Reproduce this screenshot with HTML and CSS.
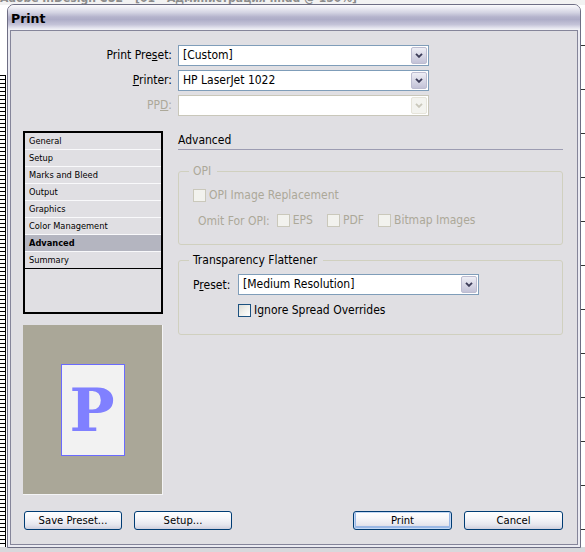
FILE: index.html
```html
<!DOCTYPE html>
<html>
<head>
<meta charset="utf-8">
<link rel="stylesheet" href="styles.css">
</head>
<body>
<div class="app">
  <div class="app-title"><span class="app-title-text">Adobe InDesign CS2 - [01 - Администрация .indd @ 150%]</span></div>
  <div class="app-body">
    <div class="ruler-v"></div>
    <div class="canvas"></div>
    <div class="ruler-r"></div>
  </div>
  <div class="app-status"></div>
</div>

<div class="dialog">
  <div class="titlebar">Print</div>
  <div class="client">
    <div class="top-form">
      <div class="lbl">Print Pre<u>s</u>et:</div>
      <div class="select"><span class="value">[Custom]</span><span class="arrow"><svg width="8" height="5" viewBox="0 0 8 5"><path d="M1 0.8 L4 3.8 L7 0.8" fill="none" stroke="#3c3c58" stroke-width="1.9"/></svg></span></div>
      <div class="lbl"><u>P</u>rinter:</div>
      <div class="select"><span class="value">HP LaserJet 1022</span><span class="arrow"><svg width="8" height="5" viewBox="0 0 8 5"><path d="M1 0.8 L4 3.8 L7 0.8" fill="none" stroke="#3c3c58" stroke-width="1.9"/></svg></span></div>
      <div class="lbl disabled">PP<u>D</u>:</div>
      <div class="select is-disabled"><span class="value"></span><span class="arrow"><svg width="8" height="5" viewBox="0 0 8 5"><path d="M1 0.8 L4 3.8 L7 0.8" fill="none" stroke="#cac8bb" stroke-width="1.9"/></svg></span></div>
    </div>

    <div class="main">
      <div class="left-col">
        <ul class="nav">
          <li>General</li>
          <li>Setup</li>
          <li>Marks and Bleed</li>
          <li>Output</li>
          <li>Graphics</li>
          <li>Color Management</li>
          <li class="active">Advanced</li>
          <li class="last">Summary</li>
        </ul>
        <div class="preview">
          <div class="page"><span class="page-letter">P</span></div>
        </div>
      </div>

      <div class="right-col">
        <div class="section-title">Advanced</div>

        <fieldset class="group group-opi is-disabled">
          <legend>OPI</legend>
          <div class="row row-cb">
            <span class="cb"></span><span class="cb-label">OPI Image Replacement</span>
          </div>
          <div class="row row-omit">
            <span class="omit-label">Omit For OPI:</span>
            <span class="cb"></span><span class="cb-label">EPS</span>
            <span class="cb cb-gap"></span><span class="cb-label">PDF</span>
            <span class="cb cb-gap"></span><span class="cb-label">Bitmap Images</span>
          </div>
        </fieldset>

        <fieldset class="group group-flat">
          <legend>Transparency Flattener</legend>
          <div class="row row-preset">
            <span class="preset-label">P<u>r</u>eset:</span>
            <div class="select select-wide"><span class="value">[Medium Resolution]</span><span class="arrow"><svg width="8" height="5" viewBox="0 0 8 5"><path d="M1 0.8 L4 3.8 L7 0.8" fill="none" stroke="#3c3c58" stroke-width="1.9"/></svg></span></div>
          </div>
          <div class="row row-ignore">
            <span class="cb cb-on"></span><span class="cb-label">Ignore Spread Overrides</span>
          </div>
        </fieldset>
      </div>
    </div>

    <div class="footer">
      <div class="btn-group">
        <div class="xp-btn">Save Preset...</div>
        <div class="xp-btn">Setup...</div>
      </div>
      <div class="btn-group btn-group-right">
        <div class="xp-btn is-default">Print</div>
        <div class="xp-btn">Cancel</div>
      </div>
    </div>
  </div>
</div>
</body>
</html>
```

FILE: styles.css
```css
html, body {
  margin: 0;
  padding: 0;
}
body {
  width: 585px;
  height: 552px;
  overflow: hidden;
  position: relative;
  font-family: "DejaVu Sans Condensed", "DejaVu Sans", sans-serif;
  font-size: 12px;
  color: #000;
  background: #fff;
}

/* ---------- background application ---------- */
.app {
  width: 585px;
  height: 552px;
  display: flex;
  flex-direction: column;
  background: #fff;
}
.app-title {
  height: 5px;
  overflow: hidden;
  background: #f2f2f2;
}
.app-title-text {
  display: block;
  margin-top: -9px;
  line-height: 14px;
  font-size: 12px;
  font-weight: bold;
  color: #8c8c8c;
  white-space: nowrap;
}
.app-body {
  flex: 1;
  display: flex;
}
.ruler-v {
  width: 5px;
  border-right: 1px solid #000;
  background:
    repeating-linear-gradient(to bottom, #000 0 1px, #fff 1px 4px);
  margin-top: 70px;
}
.canvas {
  flex: 1;
  background: #fff;
}
.ruler-r {
  width: 4px;
  background: repeating-linear-gradient(to bottom, #fff 0 40px, #333 40px 41px, #fff 41px 44px);
}
.app-status {
  height: 5px;
  background: #d8d8dc;
}

/* ---------- dialog window ---------- */
.dialog {
  position: absolute;
  left: 7px;
  top: 4px;
  width: 574px;
  height: 544px;
  box-sizing: border-box;
  border: 1px solid #6e6e84;
  border-radius: 7px 7px 0 0;
  background: #ebebf2;
  display: flex;
  flex-direction: column;
}
.titlebar {
  height: 25px;
  box-sizing: border-box;
  flex: none;
  border-radius: 6px 6px 0 0;
  background: linear-gradient(to bottom,
    #fbfbfd 0%, #ececf3 12%, #d4d4e3 30%, #b4b3cc 48%, #aeadc8 58%,
    #c4c3d8 78%, #e4e4ee 92%, #f4f4f8 100%);
  padding-left: 3px;
  padding-top: 2px;
  font-family: "DejaVu Sans", sans-serif;
  font-weight: bold;
  font-size: 12.5px;
  line-height: 23px;
  color: #000;
}
.client {
  flex: 1;
  margin: 0 2px 2px 2px;
  border: 1px solid #85859a;
  background: #e0dfe3;
  display: flex;
  flex-direction: column;
}

/* ---------- top form ---------- */
.top-form {
  margin-top: 14px;
  display: grid;
  grid-template-columns: 161px 251px;
  grid-auto-rows: 21px;
  column-gap: 6px;
  row-gap: 4px;
  align-items: center;
}
.lbl {
  text-align: right;
  line-height: 21px;
}
.lbl.disabled {
  color: #aca899;
}
u {
  text-decoration: underline;
  text-underline-offset: 1px;
}

.select {
  display: flex;
  height: 21px;
  box-sizing: border-box;
  border: 1px solid #7f9db9;
  background: #fff;
}
.select .value {
  flex: 1;
  padding-left: 4px;
  line-height: 19px;
  white-space: nowrap;
}
.select .arrow {
  width: 16px;
  margin: 1px 1px 1px 0;
  box-sizing: border-box;
  border: 1px solid #bcbcd0;
  border-radius: 2px;
  background: linear-gradient(to bottom, #eeeef5 0%, #d8d8e6 50%, #c3c2d7 100%);
  display: flex;
  align-items: center;
  justify-content: center;
}
.select.is-disabled {
  border-color: #c9c7ba;
}
.select.is-disabled .arrow {
  border-color: #e6e4da;
  background: #f3f3ef;
}
.select-wide {
  width: 241px;
}

/* ---------- main ---------- */
.main {
  margin-top: 15px;
  display: flex;
  gap: 15px;
  padding-left: 12px;
}
.left-col {
  width: 140px;
  display: flex;
  flex-direction: column;
  gap: 11px;
}
.nav {
  list-style: none;
  margin: 0;
  padding: 0;
  height: 183px;
  box-sizing: border-box;
  border: 2px solid #000;
  font-size: 9.2px;
}
.nav li {
  height: 16px;
  line-height: 15px;
  padding-left: 4px;
  border-bottom: 1px solid #f9f9fb;
  white-space: nowrap;
}
.nav li.active {
  background: #b4b5c0;
  font-weight: bold;
}
.nav li.last {
  border-bottom: 1px solid #000;
}
.preview {
  height: 170px;
  box-sizing: border-box;
  background: #aaa798;
  border-right: 1px solid #f4f4f6;
  border-bottom: 1px solid #f4f4f6;
  display: flex;
  align-items: center;
  justify-content: center;
}
.page {
  width: 64px;
  height: 92px;
  box-sizing: border-box;
  border: 1px solid #6a6aff;
  background: #f2f2f2;
  display: flex;
  align-items: center;
  justify-content: center;
}
.page-letter {
  font-family: "DejaVu Serif", "Liberation Serif", serif;
  font-weight: bold;
  font-size: 60px;
  line-height: 44px;
  color: #8080ff;
  padding-right: 1px;
}

.right-col {
  width: 385px;
  display: flex;
  flex-direction: column;
}
.section-title {
  line-height: 14px;
  padding-top: 2px;
  box-sizing: border-box;
  height: 19px;
  border-bottom: 1px solid #9c9cb2;
}

.group {
  margin: 0;
  padding: 0 10px;
  border: 1px solid #d0d0bf;
  border-radius: 3px;
  min-width: 0;
}
.group legend {
  padding: 0 6px 0 4px;
  line-height: 12px;
}
.group-opi {
  margin-top: 15px;
  padding-top: 12px;
  padding-bottom: 17px;
}
.group-flat {
  margin-top: 9px;
  padding-top: 8px;
  padding-bottom: 17px;
}
.group.is-disabled {
  color: #aca899;
}
.row {
  display: flex;
  align-items: center;
  padding-left: 4px;
  white-space: nowrap;
}
.row-cb {
  height: 13px;
}
.row-omit {
  height: 13px;
  margin-top: 12px;
  padding-left: 9px;
}
.omit-label {
  margin-right: 7px;
}
.cb {
  width: 13px;
  height: 13px;
  box-sizing: border-box;
  flex: none;
  border: 1px solid #cac8bb;
  background: #f2f2ee;
}
.cb-on {
  border-color: #1c5180;
  background: linear-gradient(135deg, #dcdcd6 0%, #f0f0ec 50%, #ffffff 100%);
}
.cb-label {
  margin-left: 3px;
  line-height: 13px;
}
.cb-gap {
  margin-left: 14px;
}
.row-preset {
  height: 21px;
}
.preset-label {
  width: 45px;
}
.row-ignore {
  height: 13px;
  margin-top: 9px;
  padding-left: 49px;
}

/* ---------- footer ---------- */
.footer {
  margin-top: auto;
  display: flex;
  justify-content: space-between;
  padding: 0 14px 14px 13px;
}
.btn-group {
  display: flex;
  gap: 12px;
}
.btn-group-right .xp-btn {
  width: 99px;
}
.xp-btn {
  width: 98px;
  height: 19px;
  box-sizing: border-box;
  border: 1px solid #003c74;
  border-radius: 3px;
  background: linear-gradient(to bottom, #ffffff 0%, #f7f7fa 35%, #e6e6ee 75%, #cfcfdd 100%);
  text-align: center;
  font-size: 11.2px;
  line-height: 17px;
  white-space: nowrap;
}
.xp-btn.is-default {
  box-shadow: inset 0 0 0 1px #c4d8f4, inset 0 -1px 0 2px #9ab8e6;
}
```
